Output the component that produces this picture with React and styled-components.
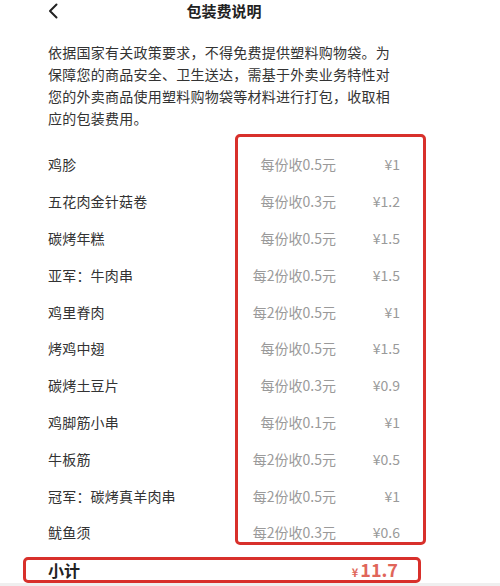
import React from "react";
import styled, { createGlobalStyle } from "styled-components";

const Global = createGlobalStyle`
  html, body { margin: 0; padding: 0; background: #fff; }
  body {
    font-family: "Noto Sans CJK SC", "Noto Sans", sans-serif;
    color: #333;
    -webkit-font-smoothing: antialiased;
  }
`;

const Screen = styled.div`
  width: 448px;
  padding: 0 48px;
  box-sizing: border-box;
  display: flex;
  flex-direction: column;
`;

const Header = styled.header`
  position: relative;
  height: 22px;
  display: flex;
  align-items: center;
  justify-content: center;
`;

const Back = styled.button`
  position: absolute;
  left: 0;
  top: 2px;
  width: 14px;
  height: 18px;
  padding: 0;
  border: 0;
  background: none;
  display: flex;
  align-items: center;
`;

const Title = styled.h1`
  margin: 0;
  font-size: 15px;
  font-weight: 700;
  line-height: 22px;
  color: #222;
`;

const Intro = styled.p`
  margin: 19px 0 0;
  width: 352px;
  font-size: 14px;
  letter-spacing: 0.25px;
  line-height: 22px;
  color: #333;
`;

const List = styled.div`
  position: relative;
  margin-top: 17px;
  display: flex;
  flex-direction: column;
`;

const Row = styled.div`
  height: 36.8px;
  display: flex;
  align-items: center;
  font-size: 14px;
  letter-spacing: 0.2px;
`;

const Name = styled.span`
  flex: 1;
  color: #333;
`;

const Rule = styled.span`
  color: #9a9a9a;
  letter-spacing: 0;
  text-align: right;
`;

const Price = styled.span`
  width: 64px;
  color: #9a9a9a;
  letter-spacing: 0;
  text-align: right;
`;

const Highlight = styled.div`
  position: absolute;
  top: -12px;
  bottom: 6px;
  left: 187px;
  width: 191px;
  box-sizing: border-box;
  border: 3px solid #d8302b;
  border-radius: 5px;
  pointer-events: none;
`;

const Total = styled.div`
  margin: 6px 0 0 -25px;
  width: 398px;
  height: 26px;
  box-sizing: border-box;
  border: 3px solid #d8302b;
  border-radius: 5px;
  padding: 0 20px 0 22px;
  display: flex;
  align-items: center;
  justify-content: space-between;
`;

const TotalLabel = styled.span`
  font-size: 16px;
  font-weight: 700;
  color: #222;
`;

const TotalValue = styled.span`
  color: #e0665a;
  font-weight: 700;
  display: flex;
  align-items: baseline;
  gap: 2px;
`;

const Yen = styled.span`
  font-size: 11px;
`;

const Amount = styled.span`
  font-size: 18px;
  line-height: 20px;
`;

const Footer = styled.div`
  height: 3px;
  margin: 0 -48px;
  width: 500px;
  background: #efefef;
`;

const items = [
  ["鸡胗", "每份收0.5元", "¥1"],
  ["五花肉金针菇卷", "每份收0.3元", "¥1.2"],
  ["碳烤年糕", "每份收0.5元", "¥1.5"],
  ["亚军：牛肉串", "每2份收0.5元", "¥1.5"],
  ["鸡里脊肉", "每2份收0.5元", "¥1"],
  ["烤鸡中翅", "每份收0.5元", "¥1.5"],
  ["碳烤土豆片", "每份收0.3元", "¥0.9"],
  ["鸡脚筋小串", "每份收0.1元", "¥1"],
  ["牛板筋", "每2份收0.5元", "¥0.5"],
  ["冠军：碳烤真羊肉串", "每2份收0.5元", "¥1"],
  ["鱿鱼须", "每2份收0.3元", "¥0.6"],
];

export default function App() {
  return (
    <>
      <Global />
      <Screen>
        <Header>
          <Back aria-label="返回">
            <svg width="10" height="16" viewBox="0 0 10 16">
              <polyline points="8.5,1.5 2,8 8.5,14.5" fill="none" stroke="#222" strokeWidth="2" strokeLinecap="round" strokeLinejoin="round" />
            </svg>
          </Back>
          <Title>包装费说明</Title>
        </Header>
        <Intro>
          依据国家有关政策要求，不得免费提供塑料购物袋。为保障您的商品安全、卫生送达，需基于外卖业务特性对您的外卖商品使用塑料购物袋等材料进行打包，收取相应的包装费用。
        </Intro>
        <List>
          {items.map(([name, rule, price]) => (
            <Row key={name}>
              <Name>{name}</Name>
              <Rule>{rule}</Rule>
              <Price>{price}</Price>
            </Row>
          ))}
          <Highlight />
        </List>
        <Total>
          <TotalLabel>小计</TotalLabel>
          <TotalValue>
            <Yen>¥</Yen>
            <Amount>11.7</Amount>
          </TotalValue>
        </Total>
        <Footer />
      </Screen>
    </>
  );
}
